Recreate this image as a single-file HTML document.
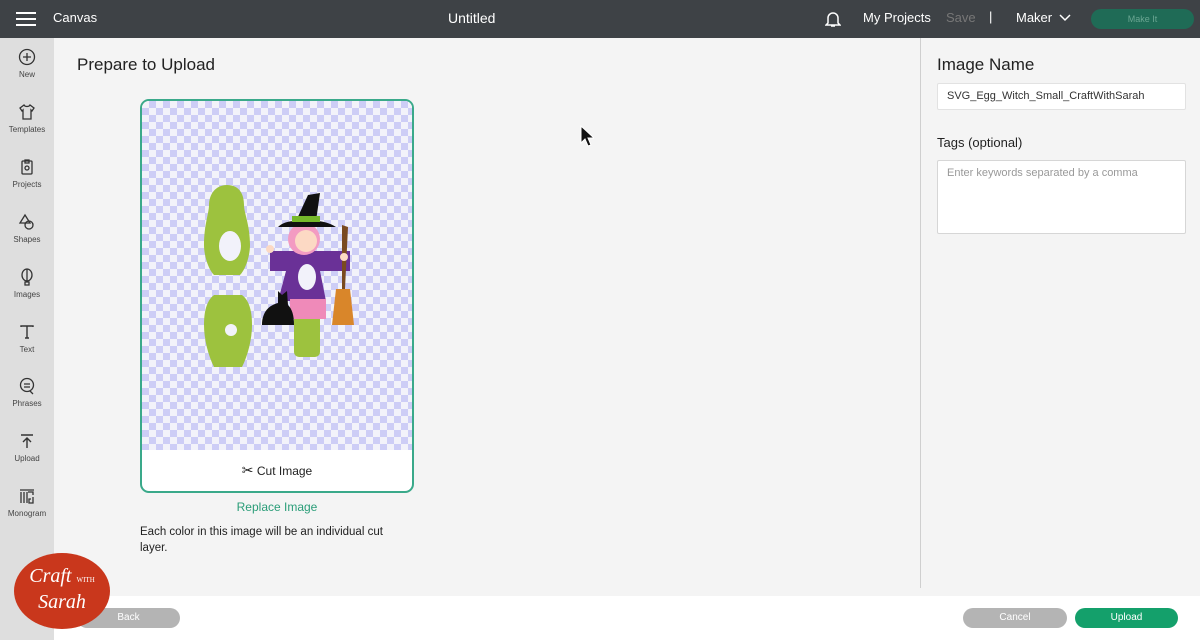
<!DOCTYPE html>
<html><head><meta charset="utf-8"><style>
*{margin:0;padding:0;box-sizing:border-box}
body{width:1200px;height:640px;overflow:hidden;font-family:"Liberation Sans",sans-serif;background:#f4f4f4;position:relative;color:#222}
.hdr{position:absolute;left:0;top:0;width:1200px;height:38px;background:#3e4246;color:#fff}
.hdr div{position:absolute;font-size:14px}
.side{position:absolute;left:0;top:38px;width:54px;height:602px;background:#dedede}
.si{position:absolute;left:0;width:54px;text-align:center;font-size:8px;color:#444}
.si svg{display:block;margin:0 auto 4px}
.foot{position:absolute;left:54px;top:596px;width:1146px;height:44px;background:#fff}
.btn{position:absolute;height:20px;border-radius:10px;color:#fff;font-size:10px;text-align:center;line-height:20px}
.card{position:absolute;left:140px;top:99px;width:274px;height:394px;border:2px solid #3aa98a;border-radius:9px;overflow:hidden;background:#fff}
.chk{position:absolute;left:0;top:0;width:270px;height:349px;background-color:#f2f2fa;background-image:linear-gradient(45deg,#cdcdf6 25%,transparent 25%,transparent 75%,#cdcdf6 75%),linear-gradient(45deg,#cdcdf6 25%,transparent 25%,transparent 75%,#cdcdf6 75%);background-size:14px 14px;background-position:0 0,7px 7px}
</style></head><body>
<div class="hdr">
<svg style="position:absolute;left:16px;top:11px" width="20" height="16"><rect y="1" width="20" height="2" fill="#fff"/><rect y="7" width="20" height="2" fill="#fff"/><rect y="13" width="20" height="2" fill="#fff"/></svg>
<div style="left:53px;top:10px;font-size:13px">Canvas</div>
<div style="left:448px;top:10px">Untitled</div>
<svg style="position:absolute;left:825px;top:10px" width="16" height="18" fill="none" stroke="#fff" stroke-width="1.5"><path d="M3 13V8a5 5 0 0 1 10 0v5l2 2H1z"/><path d="M6 16h4"/></svg>
<div style="left:863px;top:10px;font-size:13px">My Projects</div>
<div style="left:946px;top:10px;font-size:13px;color:#777">Save</div>
<div style="left:989px;top:9px;font-size:13px">|</div>
<div style="left:1016px;top:10px;font-size:13px">Maker</div>
<svg style="position:absolute;left:1059px;top:14px" width="12" height="8" fill="none" stroke="#fff" stroke-width="1.5"><path d="M1 1l5 5 5-5"/></svg>
<div style="left:1091px;top:9px;width:103px;height:20px;border-radius:10px;background:#1f6b56;color:#6aa592;font-size:9px;text-align:center;line-height:20px">Make It</div>
</div>
<div class="side">
<div class="si" style="top:10px"><svg width="18" height="18" fill="none" stroke="#333" stroke-width="1.3"><circle cx="9" cy="9" r="7.5"/><path d="M9 5v8M5 9h8"/></svg>New</div>
<div class="si" style="top:65px"><svg width="18" height="18" fill="none" stroke="#333" stroke-width="1.3"><path d="M6 2L2 5l2 3 1-1v9h8V7l1 1 2-3-4-3c-1 2-5 2-6 0z"/></svg>Templates</div>
<div class="si" style="top:120px"><svg width="18" height="18" fill="none" stroke="#333" stroke-width="1.3"><rect x="4" y="3" width="10" height="13" rx="1"/><path d="M7 2h4v3H7z"/><circle cx="9" cy="10" r="2"/></svg>Projects</div>
<div class="si" style="top:175px"><svg width="18" height="18" fill="none" stroke="#333" stroke-width="1.3"><path d="M7 2l5 8H2z"/><circle cx="11" cy="12" r="4"/></svg>Shapes</div>
<div class="si" style="top:230px"><svg width="18" height="18" fill="none" stroke="#333" stroke-width="1.3"><ellipse cx="9" cy="7" rx="5" ry="6"/><path d="M9 1v12M7 14h4v3H7z"/></svg>Images</div>
<div class="si" style="top:285px"><svg width="18" height="18" fill="none" stroke="#333" stroke-width="1.4"><path d="M3 4V3h12v1M9 3v12M7 15h4"/></svg>Text</div>
<div class="si" style="top:339px"><svg width="18" height="18" fill="none" stroke="#333" stroke-width="1.3"><circle cx="9" cy="8" r="6.5"/><path d="M6 7h6M6 10h6M12 14l3 3"/></svg>Phrases</div>
<div class="si" style="top:394px"><svg width="18" height="18" fill="none" stroke="#333" stroke-width="1.4"><path d="M3 3h12M9 16V6M5 10l4-4 4 4"/></svg>Upload</div>
<div class="si" style="top:449px"><svg width="18" height="18" fill="none" stroke="#333" stroke-width="1.3"><path d="M2 3h14M3 5v11M6 5v11M9 5v11M10 5h5v3M15 10v6h-4v-4h2"/></svg>Monogram</div>
</div>
<div style="position:absolute;left:77px;top:55px;font-size:17px;color:#222">Prepare to Upload</div>
<div class="card"><div class="chk"></div>
<svg style="position:absolute;left:0;top:0" width="270" height="349" viewBox="140 100 270 349">
<path d="M225 184c13 0 17 10 17 20 0 8 6 20 6 40 0 10-4 24-10 30l-26 0c-6-6-10-20-10-30 0-20 5-32 5-40 0-10 6-20 18-20z" fill="#9dc23e"/>
<ellipse cx="228" cy="245" rx="11" ry="15" fill="#f2f2fa"/>
<path d="M212 294h28c8 6 10 18 10 30 0 14-4 30-10 42h-28c-6-12-10-28-10-42 0-12 2-24 10-30z" fill="#9dc23e"/>
<circle cx="229" cy="329" r="6" fill="#f2f2fa"/>
<rect x="292" y="290" width="26" height="66" rx="5" fill="#9dc23e"/>
<path d="M268 250h80v20h-30l6 30h-48l8-30h-16z" fill="#6a3197"/>
<ellipse cx="305" cy="276" rx="9" ry="13" fill="#f2f2fa"/>
<rect x="288" y="298" width="36" height="20" fill="#ef8ab9"/>
<circle cx="302" cy="238" r="16" fill="#f39bc2"/>
<circle cx="304" cy="240" r="11" fill="#fcd9c4"/>
<path d="M276 226h58c-6-4-14-6-20-6l4-28-12 2-12 26c-8 0-14 2-18 6z" fill="#111"/>
<rect x="290" y="215" width="28" height="6" fill="#76b82a"/>
<path d="M340 224l6 2-3 62h-3z" fill="#7a4a20"/>
<path d="M334 288h14l4 36h-22z" fill="#d9862a"/>
<path d="M260 324c0-14 8-20 16-22l0-12 4 4 5-4 1 14c4 4 6 10 6 20z" fill="#111"/>
<circle cx="268" cy="248" r="4" fill="#fcd9c4"/><circle cx="342" cy="256" r="4" fill="#fcd9c4"/>
</svg>
<div style="position:absolute;left:0;top:361px;width:270px;text-align:center;font-size:12px;color:#222"><span style="font-size:14px">✂</span> Cut Image</div>
</div>
<div style="position:absolute;left:140px;top:500px;width:274px;text-align:center;font-size:12px;color:#2a9d78">Replace Image</div>
<div style="position:absolute;left:140px;top:524px;width:262px;font-size:11.5px;line-height:16px;color:#222">Each color in this image will be an individual cut layer.</div>
<div style="position:absolute;left:920px;top:38px;width:1px;height:550px;background:#cfcfcf"></div>
<div style="position:absolute;left:937px;top:55px;font-size:17px;color:#222">Image Name</div>
<div style="position:absolute;left:937px;top:83px;width:249px;height:27px;background:#fff;border:1px solid #e2e2e2;border-radius:2px;font-size:11px;line-height:25px;padding-left:9px;color:#333">SVG_Egg_Witch_Small_CraftWithSarah</div>
<div style="position:absolute;left:937px;top:135px;font-size:13px;color:#222">Tags (optional)</div>
<div style="position:absolute;left:937px;top:160px;width:249px;height:74px;background:#fff;border:1px solid #d6d6d6;border-radius:2px;font-size:11px;padding:6px 9px;color:#999">Enter keywords separated by a comma</div>
<div class="foot"></div>
<div class="btn" style="left:77px;top:608px;width:103px;background:#b4b4b4">Back</div>
<div class="btn" style="left:963px;top:608px;width:104px;background:#b4b4b4">Cancel</div>
<div class="btn" style="left:1075px;top:608px;width:103px;background:#14a06b">Upload</div>
<div style="position:absolute;left:14px;top:553px;width:96px;height:76px;border-radius:50%;background:#c9371c;color:#fff;font-family:'Liberation Serif',serif;font-style:italic;text-align:center;font-size:20px;line-height:22px;padding-top:12px">Craft <span style="font-size:7px;font-style:normal">WITH</span><br>Sarah</div>
<svg style="position:absolute;left:580px;top:125px" width="14" height="22"><path d="M1 1v17l4-4 3 7 3-1-3-7h6z" fill="#111" stroke="#fff" stroke-width="1"/></svg>
</body></html>
